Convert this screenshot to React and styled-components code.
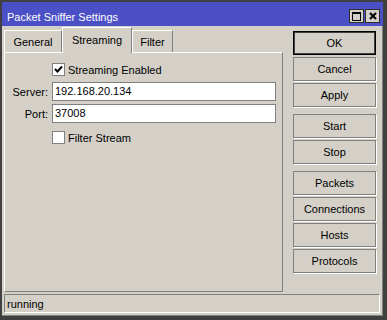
import React from 'react';
import styled, { createGlobalStyle } from 'styled-components';

const Global = createGlobalStyle`
  html, body { margin: 0; padding: 0; background: #d4d0c8; }
  body {
    font-family: "Liberation Sans", Arial, sans-serif;
    font-size: 11px;
    color: #000;
  }
  * { box-sizing: border-box; }
`;

const Window = styled.div`
  width: 387px;
  height: 320px;
  display: flex;
  flex-direction: column;
  background: #d4d0c8;
  border-style: solid;
  border-color: #404040;
  border-width: 2px 4px 4px 2px;
  box-shadow: inset -1px -1px 0 #808080;
`;

const TitleBar = styled.div`
  height: 24px;
  flex: none;
  display: flex;
  justify-content: space-between;
  align-items: flex-start;
  background: #4b50c7;
  color: #fff;
  padding: 0 3px 0 5px;
`;

const TitleText = styled.div`
  font-size: 11px;
  line-height: 13px;
  padding-top: 9px;
`;

const TitleButtons = styled.div`
  display: flex;
  gap: 1px;
  padding-top: 7px;
`;

const TitleBtn = styled.div`
  width: 15px;
  height: 14px;
  background: #d4d0c8;
  border: 1px solid #303030;
  display: flex;
  align-items: center;
  justify-content: center;
`;

const Body = styled.div`
  flex: 1;
  display: flex;
  padding: 0 0 0 2px;
  min-height: 0;
`;

const LeftCol = styled.div`
  width: 279px;
  display: flex;
  flex-direction: column;
`;

const TabStrip = styled.div`
  height: 26px;
  flex: none;
  display: flex;
  align-items: flex-end;
  position: relative;
  z-index: 1;
`;

const Tab = styled.div`
  width: ${p => p.$w}px;
  height: ${p => (p.$active ? 26 : 22)}px;
  margin-bottom: ${p => (p.$active ? -1 : 0)}px;
  background: #d4d0c8;
  border-top: 1px solid #fff;
  border-left: 1px solid #fff;
  border-right: 1px solid #808080;
  display: flex;
  justify-content: center;
  padding-top: ${p => (p.$active ? 6 : 5)}px;
  line-height: 13px;
`;

const Panel = styled.div`
  flex: 1;
  border: 1px solid;
  border-color: #fff #808080 #808080 #fff;
  padding: 10px 6px 0 0;
`;

const Row = styled.div`
  display: grid;
  grid-template-columns: 43px 1fr;
  column-gap: 4px;
  align-items: center;
  margin-top: ${p => p.$mt || 0}px;
`;

const Label = styled.div`
  text-align: right;
`;

const Input = styled.div`
  height: 19px;
  background: #fff;
  border: 1px solid #808080;
  padding-left: 2px;
  line-height: 17px;
`;

const Check = styled.label`
  grid-column: 2;
  display: flex;
  align-items: center;
  gap: 3px;
  height: 13px;
`;

const Box = styled.span`
  width: 13px;
  height: 13px;
  flex: none;
  background: #fff;
  border: 1px solid #808080;
  display: flex;
  align-items: center;
  justify-content: center;
`;

const RightCol = styled.div`
  margin-left: 10px;
  padding-top: 5px;
  display: flex;
  flex-direction: column;
`;

const Group = styled.div`
  display: flex;
  flex-direction: column;
  gap: 2px;
  margin-top: ${p => (p.$first ? 0 : 7)}px;
`;

const Button = styled.div`
  width: 83px;
  height: 24px;
  background: #d4d0c8;
  border: 1px solid ${p => (p.$default ? '#000' : '#808080')};
  box-shadow: ${p => (p.$default ? 'inset 0 0 0 1px #404040' : '1px 1px 0 #fff')};
  display: flex;
  align-items: center;
  justify-content: center;
  line-height: 13px;
`;

const StatusBar = styled.div`
  flex: none;
  height: 19px;
  margin: 2px 3px 3px 2px;
  border: 1px solid;
  border-color: #808080 #fff #fff #808080;
  padding: 2px 0 0 2px;
  line-height: 15px;
`;

const CheckMark = () => (
  <svg width="9" height="9" viewBox="0 0 9 9">
    <polyline points="1,4 3.5,6.5 8,1.5" fill="none" stroke="#000" strokeWidth="2" />
  </svg>
);

export default function App() {
  return (
    <>
      <Global />
      <Window>
        <TitleBar>
          <TitleText>Packet Sniffer Settings</TitleText>
          <TitleButtons>
            <TitleBtn>
              <svg width="9" height="9" viewBox="0 0 9 9">
                <rect x="0.5" y="0.5" width="8" height="8" fill="none" stroke="#000" />
                <rect x="0" y="0" width="9" height="2" fill="#000" />
              </svg>
            </TitleBtn>
            <TitleBtn>
              <svg width="8" height="8" viewBox="0 0 8 8">
                <path d="M1 1 L7 7 M7 1 L1 7" stroke="#000" strokeWidth="2" />
              </svg>
            </TitleBtn>
          </TitleButtons>
        </TitleBar>
        <Body>
          <LeftCol>
            <TabStrip>
              <Tab $w={58}>General</Tab>
              <Tab $w={70} $active>Streaming</Tab>
              <Tab $w={41}>Filter</Tab>
            </TabStrip>
            <Panel>
              <Row>
                <Check>
                  <Box><CheckMark /></Box>
                  Streaming Enabled
                </Check>
              </Row>
              <Row $mt={6}>
                <Label>Server:</Label>
                <Input>192.168.20.134</Input>
              </Row>
              <Row $mt={3}>
                <Label>Port:</Label>
                <Input>37008</Input>
              </Row>
              <Row $mt={8}>
                <Check>
                  <Box />
                  Filter Stream
                </Check>
              </Row>
            </Panel>
          </LeftCol>
          <RightCol>
            <Group $first>
              <Button $default>OK</Button>
              <Button>Cancel</Button>
              <Button>Apply</Button>
            </Group>
            <Group>
              <Button>Start</Button>
              <Button>Stop</Button>
            </Group>
            <Group>
              <Button>Packets</Button>
              <Button>Connections</Button>
              <Button>Hosts</Button>
              <Button>Protocols</Button>
            </Group>
          </RightCol>
        </Body>
        <StatusBar>running</StatusBar>
      </Window>
    </>
  );
}
